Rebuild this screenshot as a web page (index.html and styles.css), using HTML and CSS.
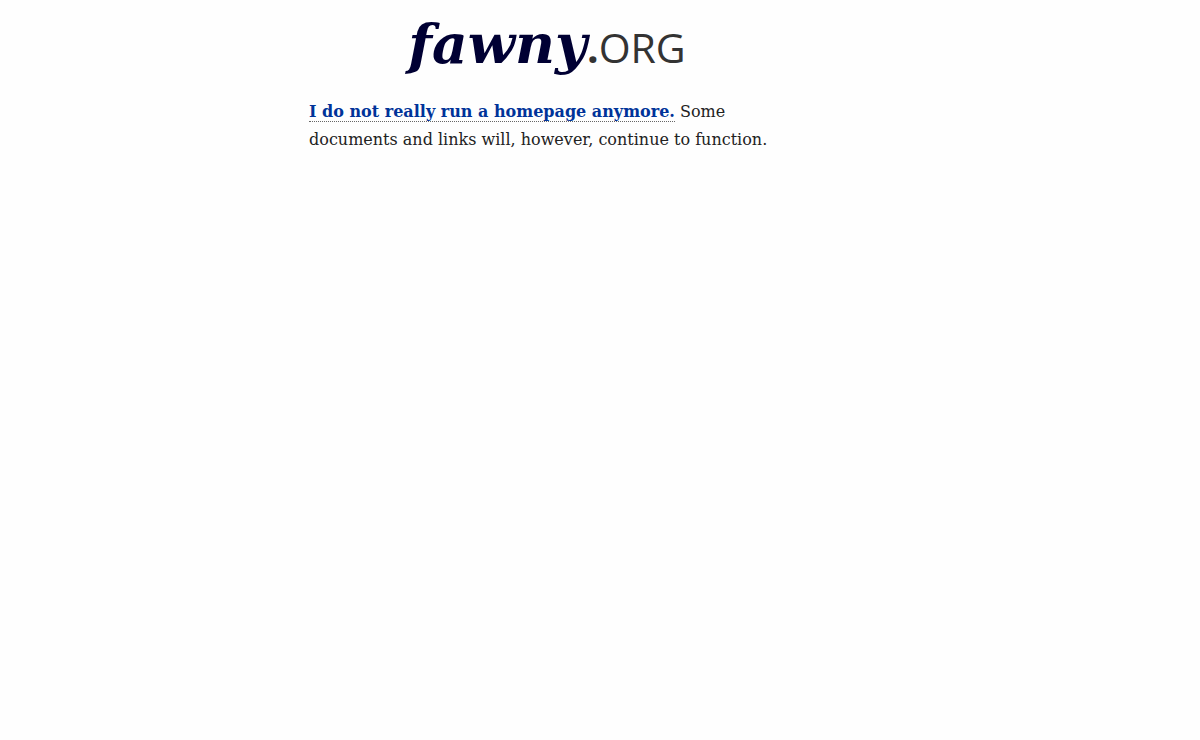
FILE: index.html
```
<!DOCTYPE html>
<html lang="en">
<head>
  <meta charset="UTF-8">
  <title>fawny.org</title>
  <meta name="viewport" content="width=device-width, initial-scale=1.0">
  <link rel="stylesheet" href="styles.css">
</head>
<body>

  <div class="page">
    <h1 class="logo"><em>fawny</em><b>.</b><span>ORG</span></h1>
    <p><a href="#">I do not really run a homepage anymore.</a> Some documents and links will, however, continue to function.</p>
  </div>

</body>
</html>
```
FILE: styles.css
```
body {
  margin: 0;
  background-color: #fefefe;
  color: #222;
  font-family: "DejaVu Serif", "Liberation Serif", serif;
  font-size: 16px;
  line-height: 28px;
}

.page {
  max-width: 474px;
  margin: 0 auto;
  padding: 8px 108px 0 0;
}

.logo {
  margin: 0 0 15px;
  padding-left: 2px;
  text-align: center;
  color: #333;
  font-family: "Open Sans", sans-serif;
  font-size: 41px;
  line-height: 72px;
  font-weight: normal;
}

.logo em {
  color: #003;
  font-family: "DejaVu Serif", serif;
  font-size: 55px;
  font-weight: bold;
}

p {
  margin: 0;
}

a {
  color: #039;
  font-weight: bold;
  text-decoration: none;
  border-bottom: 1px dotted #666;
}
```
